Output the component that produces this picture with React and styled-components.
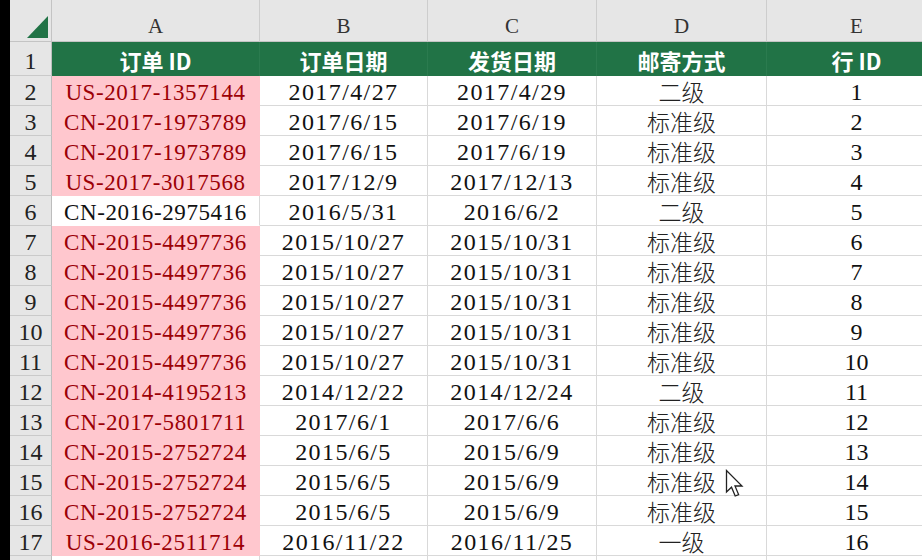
import styled, { createGlobalStyle } from "styled-components";

const GlobalStyle = createGlobalStyle`
  html, body {
    margin: 0;
    padding: 0;
    overflow: hidden;
    background: #ffffff;
  }
`;

const headers = ["订单 ID", "订单日期", "发货日期", "邮寄方式", "行 ID"];
const letters = ["A", "B", "C", "D", "E"];

const rows = [
  ["US-2017-1357144", "2017/4/27", "2017/4/29", "二级", "1", true],
  ["CN-2017-1973789", "2017/6/15", "2017/6/19", "标准级", "2", true],
  ["CN-2017-1973789", "2017/6/15", "2017/6/19", "标准级", "3", true],
  ["US-2017-3017568", "2017/12/9", "2017/12/13", "标准级", "4", true],
  ["CN-2016-2975416", "2016/5/31", "2016/6/2", "二级", "5", false],
  ["CN-2015-4497736", "2015/10/27", "2015/10/31", "标准级", "6", true],
  ["CN-2015-4497736", "2015/10/27", "2015/10/31", "标准级", "7", true],
  ["CN-2015-4497736", "2015/10/27", "2015/10/31", "标准级", "8", true],
  ["CN-2015-4497736", "2015/10/27", "2015/10/31", "标准级", "9", true],
  ["CN-2015-4497736", "2015/10/27", "2015/10/31", "标准级", "10", true],
  ["CN-2014-4195213", "2014/12/22", "2014/12/24", "二级", "11", true],
  ["CN-2017-5801711", "2017/6/1", "2017/6/6", "标准级", "12", true],
  ["CN-2015-2752724", "2015/6/5", "2015/6/9", "标准级", "13", true],
  ["CN-2015-2752724", "2015/6/5", "2015/6/9", "标准级", "14", true],
  ["CN-2015-2752724", "2015/6/5", "2015/6/9", "标准级", "15", true],
  ["US-2016-2511714", "2016/11/22", "2016/11/25", "一级", "16", true],
];

export default function App() {
  return (
    <Screen>
      <GlobalStyle />
      <Edge />
      <Sheet>
        <Corner>
          <CornerMark />
        </Corner>
        {letters.map((l) => (
          <ColHead key={l}>{l}</ColHead>
        ))}

        <RowHead tall>1</RowHead>
        {headers.map((h) => (
          <TitleCell key={h}>{h}</TitleCell>
        ))}

        {rows.map((r, i) => (
          <Row key={i} n={i + 2} data={r} />
        ))}

        {/* next row, only its top edge shows */}
        <RowHead />
        {letters.map((l) => (
          <Cell key={l} />
        ))}
      </Sheet>
      <Cursor width="22" height="30" viewBox="0 0 22 30">
        <path
          d="M1.5 1.5 L1.5 23 L6.5 18.2 L10.2 27 L13.6 25.6 L10 17 L17 17 Z"
          fill="#ffffff"
          stroke="#222"
          strokeWidth="1.3"
          strokeLinejoin="miter"
        />
      </Cursor>
    </Screen>
  );
}

function Row({ n, data }) {
  const [id, order, ship, mode, line, dup] = data;
  return (
    <>
      <RowHead>{n}</RowHead>
      <IdCell dup={dup}>{id}</IdCell>
      <DateCell>{order}</DateCell>
      <DateCell>{ship}</DateCell>
      <TextCell>{mode}</TextCell>
      <Cell>{line}</Cell>
    </>
  );
}

const Screen = styled.div`
  position: relative;
  display: flex;
  width: 922px;
  height: 560px;
  overflow: hidden;
  font-family: "Liberation Serif", "Noto Sans CJK SC", serif;
`;

const Edge = styled.div`
  width: 10px;
  flex-shrink: 0;
  background: #000;
`;

const Sheet = styled.div`
  display: grid;
  grid-template-columns: 42px 208px 168px 169px 170px 180px;
  grid-template-rows: 42px 34px repeat(17, 30px);
  align-content: start;
`;

const Corner = styled.div`
  position: relative;
  background: #e6e6e6;
  border-right: 1px solid #c4c4c4;
  border-bottom: 1px solid #c4c4c4;
`;

const CornerMark = styled.div`
  position: absolute;
  right: 3px;
  bottom: 3px;
  width: 21px;
  height: 22px;
  background: #217346;
  clip-path: polygon(100% 0, 100% 100%, 0 100%);
`;

const ColHead = styled.div`
  display: flex;
  align-items: flex-end;
  justify-content: center;
  padding-bottom: 2px;
  background: #e6e6e6;
  border-right: 1px solid #cdcdcd;
  border-bottom: 1px solid #c4c4c4;
  color: #333;
  font-size: 21px;
`;

const RowHead = styled.div`
  display: flex;
  align-items: flex-end;
  justify-content: center;
  padding-bottom: ${(p) => (p.tall ? "2px" : "1px")};
  background: #e6e6e6;
  border-right: 1px solid #bdbdbd;
  border-bottom: 1px solid #cacaca;
  color: #222;
  font-size: 24px;
  line-height: 1;
`;

const TitleCell = styled.div`
  display: flex;
  align-items: center;
  justify-content: center;
  background: #217346;
  border-right: 1px solid #2b7b4f;
  color: #fff;
  font-family: "Noto Sans CJK SC", sans-serif;
  font-weight: 700;
  font-size: 22px;
  line-height: 1;
  padding-top: 1px;
`;

const Cell = styled.div`
  display: flex;
  align-items: center;
  justify-content: center;
  border-right: 1px solid #d9d9d9;
  border-bottom: 1px solid #d9d9d9;
  color: #111;
  font-size: 24px;
  line-height: 1;
  padding-top: 3px;
  white-space: nowrap;
`;

const DateCell = styled(Cell)`
  letter-spacing: 1.4px;
`;

const TextCell = styled(Cell)`
  font-family: "Noto Sans CJK SC", sans-serif;
  font-weight: 300;
  font-size: 23px;
  line-height: 24px;
  padding-top: 0;
  color: #222;
`;

const IdCell = styled(Cell)`
  font-size: 23px;
  letter-spacing: 0.6px;
  background: ${(p) => (p.dup ? "#ffc7ce" : "#ffffff")};
  color: ${(p) => (p.dup ? "#9c0006" : "#111")};
  border-right: 1px solid ${(p) => (p.dup ? "#ffc7ce" : "#d9d9d9")};
  border-bottom: 1px solid ${(p) => (p.dup ? "#ffc7ce" : "#ffffff")};
`;

const Cursor = styled.svg`
  position: absolute;
  left: 725px;
  top: 469px;
`;
